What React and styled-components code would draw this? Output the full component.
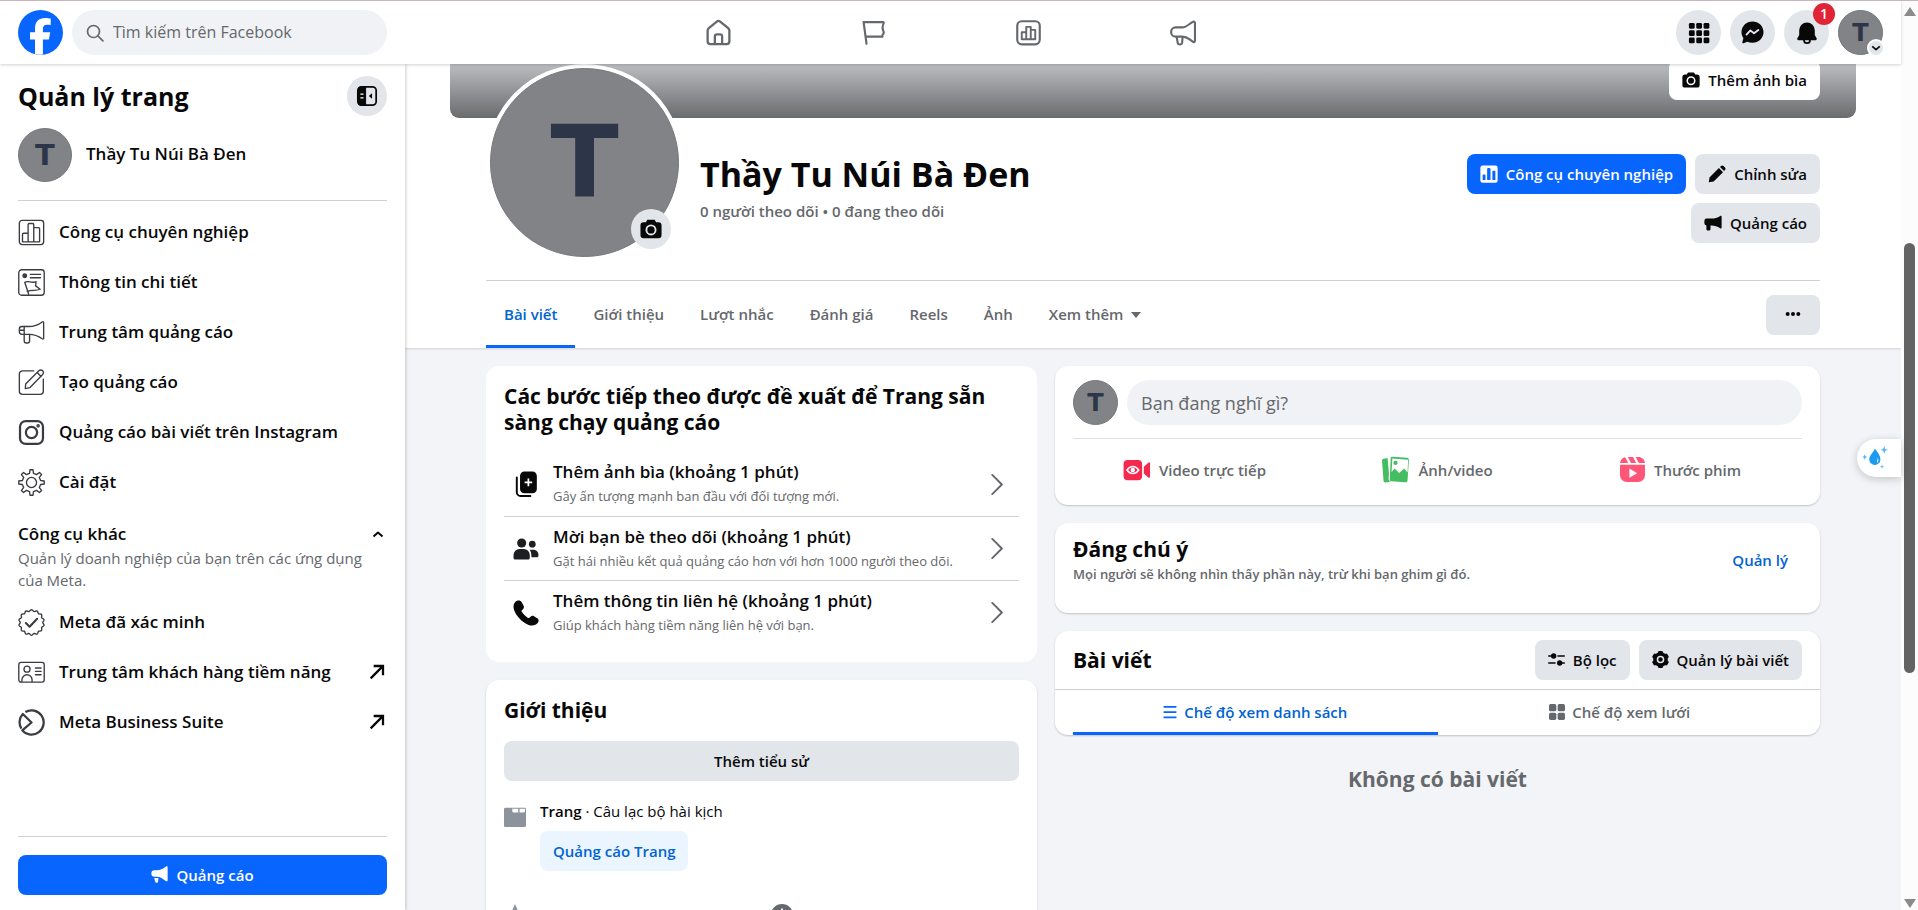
import React from "react";
import styled, { createGlobalStyle, css } from "styled-components";

const menuItems = [
  { icon: "chart", label: "Công cụ chuyên nghiệp" },
  { icon: "details", label: "Thông tin chi tiết" },
  { icon: "megaphone", label: "Trung tâm quảng cáo" },
  { icon: "compose", label: "Tạo quảng cáo" },
  { icon: "instagram", label: "Quảng cáo bài viết trên Instagram" },
  { icon: "gear", label: "Cài đặt" },
];

const otherTools = [
  { icon: "verified", label: "Meta đã xác minh" },
  { icon: "contact", label: "Trung tâm khách hàng tiềm năng", external: true },
  { icon: "suite", label: "Meta Business Suite", external: true },
];

const tabs = ["Bài viết", "Giới thiệu", "Lượt nhắc", "Đánh giá", "Reels", "Ảnh"];

const steps = [
  {
    icon: "addPhoto",
    title: "Thêm ảnh bìa (khoảng 1 phút)",
    text: "Gây ấn tượng mạnh ban đầu với đối tượng mới.",
  },
  {
    icon: "friends",
    title: "Mời bạn bè theo dõi (khoảng 1 phút)",
    text: "Gặt hái nhiều kết quả quảng cáo hơn với hơn 1000 người theo dõi.",
  },
  {
    icon: "phone",
    title: "Thêm thông tin liên hệ (khoảng 1 phút)",
    text: "Giúp khách hàng tiềm năng liên hệ với bạn.",
  },
];

// points of a wavy badge outline around (cx, cy)
const wave = (cx, cy, r, amp, count) => {
  const pts = [];
  for (let i = 0; i <= 120; i++) {
    const a = (i / 120) * Math.PI * 2 - Math.PI / 2;
    const rr = r + amp * Math.cos(a * count + (Math.PI / 2) * count);
    pts.push(`${(cx + rr * Math.cos(a)).toFixed(2)} ${(cy + rr * Math.sin(a)).toFixed(2)}`);
  }
  return `M${pts.join("L")}Z`;
};

// outline of a cog with flat teeth
const cog = (cx, cy, inner, outer, teeth) => {
  const pts = [];
  const step = (Math.PI * 2) / teeth;
  for (let i = 0; i < teeth; i++) {
    const a = i * step - Math.PI / 2;
    [[-0.27, inner], [-0.15, outer], [0.15, outer], [0.27, inner]].forEach(([k, r]) => {
      pts.push(`${(cx + r * Math.cos(a + k * step)).toFixed(2)} ${(cy + r * Math.sin(a + k * step)).toFixed(2)}`);
    });
  }
  return `M${pts.join("L")}Z`;
};

const line = (width) => ({
  fill: "none",
  stroke: "currentColor",
  strokeWidth: width,
  strokeLinecap: "round",
  strokeLinejoin: "round",
});

const drawings = {
  home: (
    <g {...line(1.9)}>
      <path d="M3 10.4c0-.8.4-1.5 1-2L10.6 3a2.2 2.2 0 0 1 2.8 0L20 8.4c.6.5 1 1.2 1 2v8.8a2.4 2.4 0 0 1-2.4 2.4H5.4A2.4 2.4 0 0 1 3 19.2z" />
      <path d="M9 21.4v-6.2c0-1 .7-1.7 1.7-1.7h2.6c1 0 1.7.7 1.7 1.7v6.2" />
    </g>
  ),
  flag: (
    <g {...line(1.9)}>
      <path d="M5.800 22L3.200 2.800h17.200c.6 0 .9.6.6 1.100-1.300 2.600-1.300 4.800 0 7.500.3.700 0 2.300-.8 2.300l-.2 2H5" />
    </g>
  ),
  chartRound: (
    <g {...line(1.9)}>
      <rect x="2" y="2" width="20" height="20.5" rx="4" />
      <path d="M6 18v-6.200h4V18zM10 18V7h4v11zM14 18V9.700h4V18z" strokeWidth="1.7" />
    </g>
  ),
  megaphoneRound: (
    <g {...line(1.9)}>
      <path d="M11 7.500H5a4 4 0 0 0-4 4c0 2.300 1.700 4.200 4 4.200h6c2.400 0 4.500 1 6.500 2.500l2.700 2c1 .7 2 .2 2-1V3.600c0-1.200-1-1.700-2-1l-2.700 1.800C15.500 5.900 13.400 7.500 11 7.500z" />
      <path d="M6 16l.8 5c.3 2.200 3.700 2.200 4 0l.4-5" />
    </g>
  ),
  grid: (
    <g fill="currentColor">
      {[1, 9, 17].map((y) => [1, 9, 17].map((x) => <rect key={`${x}-${y}`} x={x} y={y} width="6.3" height="6.3" rx="1.5" />))}
    </g>
  ),
  messenger: (
    <>
      <path fill="currentColor" d="M12 .5C5.600.5.500 5.400.500 11.600c0 2.400.7 4.500 2 6.300L1.400 22c-.2.900.5 1.500 1.300 1.200l3.900-1.600c1.600.8 3.500 1.200 5.400 1.200 6.400 0 11.500-4.900 11.500-11.200S18.400.5 12 .5z" />
      <path {...line(2)} stroke="#e2e5e9" d="M5.800 14.200l4-4.400 3.800 3 4.500-3.400" />
    </>
  ),
  bell: (
    <path fill="currentColor" d="M12 .5a8.500 8.500 0 0 0-8.500 8.500v5.200l-2 3.600c-.5.9.1 2 1.200 2h5.100a4.200 4.200 0 0 0 8.400 0h5.100c1.100 0 1.700-1.100 1.200-2l-2-3.600V9A8.500 8.500 0 0 0 12 .5zM9.700 19.800h4.600a2.300 2.300 0 0 1-4.600 0z" />
  ),
  panel: (
    <>
      <rect {...line(1.9)} x="2" y="2" width="20" height="20" rx="4" />
      <path fill="currentColor" d="M6 1.500h5v21H6a4 4 0 0 1-4-4v-13a4 4 0 0 1 4-4zM17.500 9v6L14 12z" />
      <path stroke="#fff" strokeWidth="1.5" d="M4.800 10h3.400M4.800 14h3.400" />
    </>
  ),
  chart: (
    <g {...line(1.2)}>
      <rect x="1.2" y="1.2" width="21.6" height="21.6" rx="2.5" />
      <path d="M4 20.300v-6.600c0-.7.4-1 1-1h4v7.600zM9 20.300V5c0-.7.400-1 1-1h3c.7 0 1 .3 1 1v15.300zM14 20.300V7.600h4.200c.7 0 1 .4 1 1v11.700z" />
    </g>
  ),
  details: (
    <g {...line(1.2)}>
      <rect x=".7" y=".7" width="22.6" height="22.6" rx="2.5" />
      <circle cx="6" cy="6" r="1.6" fill="currentColor" />
      <path d="M11 4.800h9M11 7.800h9M9.500 22.500L6 11.800c3.500-2 6.500 1.500 10-.7l-.3 3.900 4 3c-3.500 1.800-8 .2-11.500 2" />
    </g>
  ),
  megaphone: (
    <g {...line(1.2)}>
      <path d="M9.500 6.700H3.500c-1.300 0-2.300.9-2.300 2.200v2.500c0 1.300 1 2.200 2.300 2.200h6c4.700 0 8.500 1.300 12 4 .7.500 1.300.2 1.300-.6V3.300c0-.9-.6-1.200-1.300-.7-3.500 2.700-7.300 4.100-12 4.100z" />
      <path d="M5.500 6.700v12.600c0 1.400.8 2 2 2h.8c1.300 0 2-.6 2-2v-5.700M1.500 10h4" />
    </g>
  ),
  compose: (
    <g {...line(1.2)}>
      <path d="M14 1.700H4A2.800 2.800 0 0 0 1.200 4.500v15.300a2.800 2.800 0 0 0 2.800 2.800h15.700a2.800 2.800 0 0 0 2.800-2.800V9" />
      <path d="M6.500 17.500l.3-4.200L18.500 1.600c1-1 2.500-.9 3.400 0s1 2.300 0 3.300L10.500 16.600zM17 3.200l3.500 3.500" />
    </g>
  ),
  instagram: (
    <g {...line(2)}>
      <rect x="1.8" y="1.8" width="20.4" height="20.4" rx="5" />
      <circle cx="12" cy="12" r="5" />
      <circle cx="17.9" cy="6.1" r=".6" />
    </g>
  ),
  gear: (
    <g {...line(1.2)}>
      <path d={cog(12, 12, 8.3, 11.4, 8)} />
      <circle cx="12" cy="12" r="4.5" />
    </g>
  ),
  verified: (
    <g {...line(1.2)}>
      <path d={wave(12, 12, 10.7, 0.7, 14)} />
      <path d="M7 12.500l3.300 3.200 6.700-7" strokeWidth="1.9" />
    </g>
  ),
  contact: (
    <g {...line(1.2)}>
      <rect x=".7" y="3" width="22.6" height="17.5" rx="2" />
      <circle cx="8" cy="9" r="2.7" />
      <path d="M3.500 20v-1.500a4.500 4.500 0 0 1 9 0V20M15.500 8h5M15.500 11h5M15.500 14h5" />
    </g>
  ),
  suite: (
    <g {...line(2)} strokeLinecap="butt">
      <path d="M6.500 2.700A10.800 10.800 0 1 1 3.800 19L12 12 4.300 4.500A10.800 10.800 0 0 0 3 17.500" />
    </g>
  ),
  arrow: <path {...line(3.4)} strokeLinecap="butt" strokeLinejoin="miter" d="M2.500 21.500L20 4M7 3h14v14" />,
  caretUp: <path {...line(4)} strokeLinecap="butt" d="M3 17l9-8 9 8" />,
  caretDown: <path {...line(4)} strokeLinecap="butt" d="M3 8l9 8 9-8" />,
  ads: (
    <path fill="currentColor" d="M10 6H3.500A3 3 0 0 0 .5 9v3.300a3 3 0 0 0 2.700 3V20c0 1.400 1 2 2 2h1.500c1.200 0 2-.8 2-2v-4.700H10c4 0 8 1.200 11.600 3.600 1 .7 1.900.2 1.900-1V3.500c0-1.200-.9-1.700-1.900-1C18 4.800 14 6 10 6z" />
  ),
  adsWhite: (
    <path fill="currentColor" d="M8 6H5A4.500 4.500 0 0 0 .5 10.500 4.500 4.500 0 0 0 5 15h3c5 0 9 3 12.800 6 1.300.9 2.700.4 2.700-1V2c0-1.500-1.500-2-2.700-1C17 4 13 6 8 6zM4.500 17h6l-.5 5.200c-.3 2-3.500 2-4 0z" />
  ),
  camera: (
    <path fill="currentColor" fillRule="evenodd" d="M8 2h8l1.600 2.500H20A3.500 3.500 0 0 1 23.500 8v10.500A3.500 3.500 0 0 1 20 22H4A3.500 3.500 0 0 1 .5 18.500V8A3.500 3.500 0 0 1 4 4.500h2.400zm4 5a6 6 0 1 0 0 12 6 6 0 0 0 0-12zm0 2a4 4 0 1 1 0 8 4 4 0 0 1 0-8z" />
  ),
  tools: (
    <>
      <rect x=".5" y=".5" width="23" height="23" rx="3" fill="#fff" />
      <path fill="#0866ff" d="M3.500 20v-6.500c0-1.200 3.800-1.200 3.800 0V20zM9.500 20V5c0-1.500 4.500-1.500 4.500 0v15zM16.500 20V8.500c0-1.300 4-1.300 4 0V20z" />
    </>
  ),
  pencil: (
    <path fill="currentColor" d="M1 23l1-6.500L14.500 4l5.500 5.500L7.500 22zM16 2.600l1.300-1.200c1-1 2.500-1 3.500 0l1.800 1.800c1 1 1 2.500 0 3.500L21.400 8z" />
  ),
  dots: (
    <g fill="currentColor">
      <circle cx="4" cy="12" r="3" />
      <circle cx="12" cy="12" r="3" />
      <circle cx="20" cy="12" r="3" />
    </g>
  ),
  addPhoto: (
    <>
      <rect x="6.5" y=".5" width="15.5" height="20" rx="4" fill="currentColor" />
      <path {...line(1.8)} d="M3.500 6v13.500a3.500 3.500 0 0 0 3.500 3.500h9" />
      <path stroke="#fff" strokeWidth="1.6" d="M14.200 7v7M10.700 10.500h7" />
    </>
  ),
  friends: (
    <g fill="#1c1e21">
      <circle cx="8" cy="6.5" r="4.2" />
      <path d="M.5 20v-2.500a5.500 5.500 0 0 1 5.500-5.500h4a5.500 5.500 0 0 1 5.500 5.500V20c0 1-.6 1.700-1.700 1.700H2.200C1.100 21.700.5 21 .5 20z" />
      <circle cx="17.8" cy="7.5" r="3.1" />
      <path d="M15.500 12.600h3.300c2.600 0 4.700 2 4.700 4.600v.8c0 1-.7 1.700-1.700 1.700H17c0-3-.2-5-1.500-7.100z" />
    </g>
  ),
  phone: (
    <path fill="currentColor" d="M3.600.8C5 0 7 .3 7.900 1.800l1.900 3.400c.6 1.200.3 2.400-.6 3.300l-1 1c-.4.400-.4 1 0 1.600a22 22 0 0 0 5.300 5.300c.6.400 1.200.4 1.700 0l1-1c.9-.9 2.100-1 3.200-.4l3 1.800c1.500 1 1.500 3 .5 4.300-2 2.700-5.700 3.200-9 1.700C8 20.200 3 14.700 1 9.200-.2 5.800.600 2.300 3.600.800z" />
  ),
  chevron: <path {...line(2.2)} d="M6 1l11 11L6 23" />,
  folder: (
    <path fill="#8c939d" fillRule="evenodd" d="M0 3.500A1.500 1.500 0 0 1 1.500 2h21A1.500 1.500 0 0 1 24 3.500v18a1.500 1.500 0 0 1-1.500 1.500h-21A1.500 1.500 0 0 1 0 21.500zM9 3v2.500c0 1 .6 1.500 1.500 1.500h5V3zM17 3v4h4.500c1 0 1.500-.5 1.500-1.500V3z" />
  ),
  live: (
    <>
      <path fill="#f3294e" d="M4 3.500h9.500c2 0 3.500 1.300 3.500 3.500v11c0 2.200-1.500 3.500-3.500 3.500H4c-2 0-3.500-1.300-3.500-3.500V7C.5 4.800 2 3.500 4 3.500zM18.500 9.500L22.500 6c.8-.7 1.500-.4 1.500.6v11.800c0 1-.7 1.300-1.500.6l-4-3.500z" />
      <path fill="none" stroke="#fff" strokeWidth="1.3" d="M3.500 12.400c3-4.200 7.500-4.200 10.500 0-3 4.200-7.500 4.200-10.500 0z" />
      <circle cx="8.700" cy="12.400" r="2" fill="#fff" />
    </>
  ),
  photo: (
    <>
      <path fill="#45bd62" d="M1.500 2.500L5 1.800 6.800 23l-4 .5c-.8 0-1.300-.4-1.400-1.200L0 4.200C0 3.200.6 2.600 1.500 2.500z" />
      <path fill="#fff" d="M9.300.6l-2 1.500-1.500 18.500 2 2z" />
      <path fill="#45bd62" fillRule="evenodd" d="M9.300.600l13 1c1 .1 1.700.8 1.600 1.900l-1.200 18.200c-.1 1.100-.9 1.800-2 1.700L8.300 22.500c-1-.1-1.500-.9-1.400-1.900L7.700 2.200C7.800 1.100 8.300.5 9.300.6zM9.200 2.200l-.7 12 2.700-3 4 4 4.500-4 3 3.500.5-11.300z" />
      <circle cx="12" cy="6.200" r="1.900" fill="#45bd62" />
    </>
  ),
  reels: (
    <>
      <path fill="#ff5677" d="M0 7.500h24v10A6.500 6.500 0 0 1 17.500 24h-11A6.500 6.500 0 0 1 0 17.500zM0 5.700C.5 2.300 2.500.5 5 .2l3 5.500zM7.500 0h5l3 5.700h-5zM15 0h2.500C21 0 23.600 2.500 24 5.700h-6z" />
      <path fill="#fff" d="M9 11l7.500 4.500L9 20z" />
    </>
  ),
  filter: (
    <>
      <path {...line(2)} d="M1 7h6M14 7h9M1 17h9M18 17h5" />
      <circle cx="8" cy="7" r="3.8" fill="currentColor" />
      <circle cx="16.5" cy="17" r="3.8" fill="currentColor" />
    </>
  ),
  gearSolid: (
    <>
      <path {...line(3)} fill="currentColor" d={cog(12, 12, 9, 10.8, 6)} />
      <circle cx="12" cy="12" r="4.3" fill="none" stroke="#e2e5e9" strokeWidth="2.2" />
    </>
  ),
  list: <path stroke="#0866ff" strokeWidth="3" d="M1 3h22M1 12h22M1 21h22" />,
  tiles: (
    <g fill="currentColor">
      {[0, 13].map((y) => [0, 13].map((x) => <rect key={`${x}-${y}`} x={x} y={y} width="11" height="11" rx="2.5" />))}
    </g>
  ),
  search: (
    <g {...line(2.3)}>
      <circle cx="10" cy="10" r="8" />
      <path d="M16 16l6.500 6.500" />
    </g>
  ),
  star: <path fill="#8c939d" d="M12 0l3.400 7.800 8.600.8-6.500 5.600 2 8.300L12 18.200 4.500 22.500l2-8.300L0 8.600l8.600-.8z" />,
  info: (
    <>
      <circle cx="12" cy="12" r="12" fill="#65686c" />
      <path stroke="#fff" strokeWidth="2" d="M12 5v3M12 10v8" />
    </>
  ),
  drop: (
    <g fill="#1d9bf0">
      <path d="M12 3.500c3 3.800 5 6.500 5 9.800a5 5 0 0 1-10.300 0C6.700 10 10 7.500 12 3.500z" />
      <path fill="#fff" d="M14.500 12c1 1.700.8 3.500-.5 4.600.2-1.700 0-3 .5-4.600z" />
      <path fill="#4db5f9" d="M20.500 1l.9 2.600 2.600.9-2.600.9-.9 2.600-.9-2.600-2.600-.9 2.600-.9zM2.500 8.500l.7 1.800 1.800.7-1.800.7-.7 1.800-.7-1.800L0 11l1.800-.7zM18.500 18l.5 1.500 1.500.5-1.500.5-.5 1.500-.5-1.500-1.500-.5 1.500-.5z" />
    </g>
  ),
};

const Icon = ({ type, size = 18 }) => (
  <IconSvg viewBox="0 0 24 24" width={size} height={size} aria-hidden="true">
    {drawings[type]}
  </IconSvg>
);

const Avatar = ({ size }) => <AvatarCircle $size={size}>T</AvatarCircle>;

const TopBar = () => (
  <Header>
    <HeaderLeft>
      <LogoLink href="#" aria-label="Facebook">
        <svg viewBox="0 0 45 45" width="45" height="45">
          <circle cx="22.5" cy="22.5" r="22.5" fill="#0866ff" />
          <path fill="#fff" d="M17 44.300V29.500h-5v-7.300h5V19c0-7.500 3.500-11 10.500-11 1.700 0 4 .3 5.200.6v6.300c-.8-.1-2-.1-3-.1-3.600 0-4.800 1.300-4.800 4.700v2.700h7.300l-1.300 7.300h-6v14.900a22.500 22.500 0 0 1-7.900-.1z" />
        </svg>
      </LogoLink>
      <SearchBox>
        <Icon type="search" size={18} />
        <SearchInput type="search" placeholder="Tìm kiếm trên Facebook" aria-label="Tìm kiếm trên Facebook" />
      </SearchBox>
    </HeaderLeft>
    <TopNav>
      <NavLink href="#" aria-label="Trang chủ"><Icon type="home" size={29} /></NavLink>
      <NavLink href="#" aria-label="Trang"><Icon type="flag" size={27} /></NavLink>
      <NavLink href="#" aria-label="Bảng điều khiển"><Icon type="chartRound" size={27} /></NavLink>
      <NavLink href="#" aria-label="Quảng cáo"><Icon type="megaphoneRound" size={27} /></NavLink>
    </TopNav>
    <HeaderRight>
      <RoundButton $size={45} aria-label="Menu"><Icon type="grid" size={22} /></RoundButton>
      <RoundButton $size={45} aria-label="Messenger"><Icon type="messenger" size={23} /></RoundButton>
      <RoundButton $size={45} aria-label="Thông báo">
        <Icon type="bell" size={22} />
        <Badge>1</Badge>
      </RoundButton>
      <RoundButton $size={45} aria-label="Tài khoản">
        <Avatar size={45} />
        <AccountArrow><Icon type="caretDown" size={10} /></AccountArrow>
      </RoundButton>
    </HeaderRight>
  </Header>
);

const MenuItem = ({ icon, label, external }) => (
  <li>
    <MenuLink href="#">
      <MenuIcon><Icon type={icon} size={27} /></MenuIcon>
      <MenuLabel>{label}</MenuLabel>
      {external && <Icon type="arrow" size={16} />}
    </MenuLink>
  </li>
);

const SideBar = () => (
  <Side>
    <SideTop>
      <SideTitle>Quản lý trang</SideTitle>
      <RoundButton $size={40} aria-label="Thu gọn"><Icon type="panel" size={22} /></RoundButton>
    </SideTop>
    <PageLink href="#">
      <Avatar size={54} />
      <PageLinkName>Thầy Tu Núi Bà Đen</PageLinkName>
    </PageLink>
    <Menu>{menuItems.map((item) => <MenuItem key={item.label} {...item} />)}</Menu>
    <OtherHead>
      <span>Công cụ khác</span>
      <Icon type="caretUp" size={12} />
    </OtherHead>
    <OtherText>Quản lý doanh nghiệp của bạn trên các ứng dụng của Meta.</OtherText>
    <OtherMenu>{otherTools.map((item) => <MenuItem key={item.label} {...item} />)}</OtherMenu>
    <SideBottom>
      <Button $primary $full>
        <Icon type="adsWhite" size={17} />
        Quảng cáo
      </Button>
    </SideBottom>
  </Side>
);

const Profile = () => (
  <ProfileHead>
    <Cover>
      <Button $white><Icon type="camera" />Thêm ảnh bìa</Button>
    </Cover>
    <Inner>
      <ProfileRow>
        <ProfilePhoto>
          <Avatar size={189} />
          <PhotoButton $size={40} aria-label="Đổi ảnh đại diện"><Icon type="camera" size={22} /></PhotoButton>
        </ProfilePhoto>
        <ProfileText>
          <ProfileName>Thầy Tu Núi Bà Đen</ProfileName>
          <Follow>0 người theo dõi • 0 đang theo dõi</Follow>
        </ProfileText>
        <ProfileActions>
          <Button $primary><Icon type="tools" />Công cụ chuyên nghiệp</Button>
          <Button><Icon type="pencil" />Chỉnh sửa</Button>
          <Button><Icon type="ads" />Quảng cáo</Button>
        </ProfileActions>
      </ProfileRow>
      <TabBar>
        {tabs.map((tab, i) => (
          <Tab href="#" key={tab} $active={i === 0}>{tab}</Tab>
        ))}
        <Tab href="#">Xem thêm<Triangle /></Tab>
        <MoreButton aria-label="Tùy chọn khác"><Icon type="dots" size={16} /></MoreButton>
      </TabBar>
    </Inner>
  </ProfileHead>
);

const StepsCard = () => (
  <Card $flat>
    <StepsBody>
      <CardTitle>Các bước tiếp theo được đề xuất để Trang sẵn sàng chạy quảng cáo</CardTitle>
      <StepList>
        {steps.map((step) => (
          <Step key={step.title}>
            <Icon type={step.icon} size={26} />
            <StepText>
              <StepTitle>{step.title}</StepTitle>
              <StepNote>{step.text}</StepNote>
            </StepText>
            <StepGo aria-label={step.title}><Icon type="chevron" size={21} /></StepGo>
          </Step>
        ))}
      </StepList>
    </StepsBody>
  </Card>
);

const AboutCard = () => (
  <Card>
    <AboutBody>
      <CardTitle>Giới thiệu</CardTitle>
      <Button $full>Thêm tiểu sử</Button>
      <AboutRow>
        <Icon type="folder" size={22} />
        <div>
          <AboutText><b>Trang</b> · Câu lạc bộ hài kịch</AboutText>
          <Button $soft>Quảng cáo Trang</Button>
        </div>
      </AboutRow>
      <AboutNext>
        <Icon type="star" size={22} />
        <Icon type="info" size={22} />
      </AboutNext>
    </AboutBody>
  </Card>
);

const Composer = () => (
  <Card>
    <ComposerTop>
      <Avatar size={45} />
      <ComposerInput placeholder="Bạn đang nghĩ gì?" aria-label="Bạn đang nghĩ gì?" />
    </ComposerTop>
    <ComposerActions>
      <ComposerAction><Icon type="live" size={27} />Video trực tiếp</ComposerAction>
      <ComposerAction><Icon type="photo" size={27} />Ảnh/video</ComposerAction>
      <ComposerAction><Icon type="reels" size={25} />Thước phim</ComposerAction>
    </ComposerActions>
  </Card>
);

const Featured = () => (
  <Card>
    <FeaturedBody>
      <div>
        <CardTitle>Đáng chú ý</CardTitle>
        <FeaturedNote>Mọi người sẽ không nhìn thấy phần này, trừ khi bạn ghim gì đó.</FeaturedNote>
      </div>
      <TextLink href="#">Quản lý</TextLink>
    </FeaturedBody>
  </Card>
);

const Posts = () => (
  <>
    <Card>
      <PostsTop>
        <CardTitle>Bài viết</CardTitle>
        <Button><Icon type="filter" size={17} />Bộ lọc</Button>
        <Button><Icon type="gearSolid" size={17} />Quản lý bài viết</Button>
      </PostsTop>
      <ViewTabs>
        <ViewTab $active><Icon type="list" size={14} />Chế độ xem danh sách</ViewTab>
        <ViewTab><Icon type="tiles" size={16} />Chế độ xem lưới</ViewTab>
      </ViewTabs>
    </Card>
    <Empty>Không có bài viết</Empty>
  </>
);

const App = () => (
  <Screen>
    <GlobalStyle />
    <Window>
      <TopBar />
      <Body>
        <SideBar />
        <Main>
          <Profile />
          <Content>
            <Column>
              <StepsCard />
              <AboutCard />
            </Column>
            <Column>
              <Composer />
              <Featured />
              <Posts />
            </Column>
          </Content>
        </Main>
      </Body>
      <Floating aria-label="Trợ lý"><Icon type="drop" size={26} /></Floating>
    </Window>
    <ScrollBar>
      <ScrollArrow />
      <ScrollTrack>
        <ScrollThumb />
      </ScrollTrack>
      <ScrollArrow $down />
    </ScrollBar>
  </Screen>
);

export default App;

const GlobalStyle = createGlobalStyle`
  * {
    box-sizing: border-box;
  }
  body {
    margin: 0;
    font-family: "Open Sans", "Noto Sans", sans-serif;
    font-size: 16px;
    color: #080809;
    background: #f2f4f7;
  }
  h1, h2, p, ul {
    margin: 0;
    padding: 0;
  }
  ul {
    list-style: none;
  }
  a {
    color: inherit;
    text-decoration: none;
  }
  button, input {
    font-family: inherit;
    color: inherit;
    border: none;
    outline: none;
  }
  button {
    cursor: pointer;
  }
`;

const Screen = styled.div`
  display: flex;
  height: 100vh;
  overflow: hidden;
  border-top: 1px solid #cbb3bb;
`;

const Window = styled.div`
  position: relative;
  flex: 1;
  min-width: 0;
  display: flex;
  flex-direction: column;
`;

const IconSvg = styled.svg`
  display: block;
  flex-shrink: 0;
`;

const AvatarCircle = styled.span`
  width: ${(props) => props.$size}px;
  height: ${(props) => props.$size}px;
  flex-shrink: 0;
  display: flex;
  align-items: center;
  justify-content: center;
  border-radius: 50%;
  border: 1px solid #77787b;
  background: #828386;
  color: #2c3648;
  font-family: "DejaVu Sans", sans-serif;
  font-weight: 700;
  font-size: ${(props) => Math.round(props.$size * 0.53)}px;
  line-height: 1;
`;

const Header = styled.header`
  position: relative;
  z-index: 2;
  height: 63px;
  flex-shrink: 0;
  display: grid;
  grid-template-columns: 1fr auto 1fr;
  align-items: center;
  padding: 0 18px;
  background: #fff;
  box-shadow: 0 1px 3px rgba(0, 0, 0, 0.18);
`;

const HeaderLeft = styled.div`
  display: flex;
  align-items: center;
  gap: 9px;
`;

const LogoLink = styled.a`
  display: block;
  height: 45px;
`;

const SearchBox = styled.label`
  width: 315px;
  height: 45px;
  display: flex;
  align-items: center;
  gap: 9px;
  padding: 0 14px;
  border-radius: 23px;
  background: #f0f2f5;
  color: #65686c;
`;

const SearchInput = styled.input`
  flex: 1;
  min-width: 0;
  padding: 0 0 2px;
  background: transparent;
  font-size: 16px;
  &::placeholder {
    color: #65686c;
  }
`;

const TopNav = styled.nav`
  display: flex;
`;

const NavLink = styled.a`
  width: 155px;
  height: 60px;
  display: flex;
  align-items: center;
  justify-content: center;
  color: #65686c;
`;

const HeaderRight = styled.div`
  display: flex;
  justify-content: flex-end;
  gap: 9px;
`;

const RoundButton = styled.button`
  position: relative;
  width: ${(props) => props.$size}px;
  height: ${(props) => props.$size}px;
  flex-shrink: 0;
  display: flex;
  align-items: center;
  justify-content: center;
  padding: 0;
  border-radius: 50%;
  background: #e2e5e9;
`;

const Badge = styled.span`
  position: absolute;
  top: -7px;
  right: -6px;
  width: 22px;
  height: 22px;
  border-radius: 50%;
  background: #e02436;
  color: #fff;
  font-size: 14px;
  font-weight: 600;
  line-height: 22px;
  text-align: center;
`;

const AccountArrow = styled.span`
  position: absolute;
  right: -2px;
  bottom: -2px;
  width: 18px;
  height: 18px;
  display: flex;
  align-items: center;
  justify-content: center;
  border: 2px solid #fff;
  border-radius: 50%;
  background: #e2e5e9;
`;

const Body = styled.div`
  flex: 1;
  min-height: 0;
  display: flex;
`;

const Side = styled.aside`
  position: relative;
  z-index: 1;
  width: 405px;
  flex-shrink: 0;
  display: flex;
  flex-direction: column;
  padding: 12px 18px 15px;
  background: #fff;
  box-shadow: 1px 0 3px rgba(0, 0, 0, 0.2);
`;

const SideTop = styled.div`
  display: flex;
  align-items: center;
  justify-content: space-between;
`;

const SideTitle = styled.h1`
  font-size: 25px;
  font-weight: 700;
  line-height: 32px;
`;

const PageLink = styled.a`
  display: flex;
  align-items: center;
  gap: 14px;
  padding: 12px 0 18px;
  border-bottom: 1px solid #ced0d4;
`;

const PageLinkName = styled.span`
  padding-bottom: 3px;
  font-size: 17px;
  font-weight: 600;
`;

const Menu = styled.ul`
  padding-top: 6px;
`;

const OtherMenu = styled(Menu)`
  flex: 1;
`;

const MenuLink = styled.a`
  height: 50px;
  display: flex;
  align-items: center;
  gap: 14px;
  padding-right: 2px;
`;

const MenuIcon = styled.span`
  color: #3a3c40;
`;

const MenuLabel = styled.span`
  flex: 1;
  padding-bottom: 2px;
  font-size: 17px;
  font-weight: 600;
  white-space: nowrap;
`;

const OtherHead = styled.div`
  display: flex;
  align-items: center;
  justify-content: space-between;
  padding: 16px 3px 2px 0;
  font-size: 17px;
  font-weight: 600;
  line-height: 22px;
`;

const OtherText = styled.p`
  font-size: 15px;
  line-height: 22px;
  color: #65686c;
`;

const SideBottom = styled.div`
  padding-top: 18px;
  border-top: 1px solid #ced0d4;
`;

const Button = styled.button`
  height: 40px;
  display: inline-flex;
  align-items: center;
  justify-content: center;
  gap: 8px;
  width: ${(props) => (props.$full ? "100%" : "auto")};
  padding: 0 13px 1px;
  border-radius: 8px;
  background: #e2e5e9;
  font-size: 15px;
  font-weight: 600;
  white-space: nowrap;
  ${(props) =>
    props.$primary &&
    css`
      background: #0866ff;
      color: #fff;
    `}
  ${(props) =>
    props.$white &&
    css`
      background: #fff;
    `}
  ${(props) =>
    props.$soft &&
    css`
      background: #ebf5ff;
      color: #0064d1;
    `}
`;

const Main = styled.main`
  flex: 1;
  min-width: 0;
  overflow: hidden;
`;

const ProfileHead = styled.section`
  padding: 0 45px;
  background: #fff;
  box-shadow: 0 1px 2px rgba(0, 0, 0, 0.15);
`;

const Cover = styled.div`
  height: 54px;
  display: flex;
  align-items: flex-end;
  justify-content: flex-end;
  padding: 0 36px 18px;
  border-radius: 0 0 9px 9px;
  background: linear-gradient(#bcbdc1, #6a6b6d);
`;

const Inner = styled.div`
  padding: 0 36px;
`;

const ProfileRow = styled.div`
  height: 163px;
  display: flex;
  align-items: flex-start;
  border-bottom: 1px solid #ced0d4;
`;

const ProfilePhoto = styled.div`
  position: relative;
  margin-top: -54px;
  padding: 4px;
  border-radius: 50%;
  background: #fff;
`;

const PhotoButton = styled(RoundButton)`
  position: absolute;
  right: 12px;
  bottom: 12px;
`;

const ProfileText = styled.div`
  flex: 1;
  padding: 35px 0 0 17px;
`;

const ProfileName = styled.h1`
  font-size: 34px;
  font-weight: 700;
  line-height: 42px;
  white-space: nowrap;
`;

const Follow = styled.p`
  padding-top: 6px;
  font-size: 15px;
  font-weight: 600;
  line-height: 20px;
  color: #65686c;
`;

const ProfileActions = styled.div`
  width: 360px;
  display: flex;
  flex-wrap: wrap;
  justify-content: flex-end;
  gap: 9px;
  padding-top: 36px;
`;

const TabBar = styled.nav`
  height: 67px;
  display: flex;
  align-items: center;
`;

const Tab = styled.a`
  height: 67px;
  display: flex;
  align-items: center;
  gap: 8px;
  padding: 1px 18px 0;
  border-bottom: 3px solid ${(props) => (props.$active ? "#0866ff" : "transparent")};
  color: ${(props) => (props.$active ? "#0064d1" : "#65686c")};
  font-size: 15px;
  font-weight: 600;
  white-space: nowrap;
`;

const Triangle = styled.i`
  margin-top: 2px;
  border: 5px solid transparent;
  border-top: 6px solid #65686c;
  border-bottom: none;
`;

const MoreButton = styled(Button)`
  width: 54px;
  margin-left: auto;
`;

const Content = styled.div`
  display: grid;
  grid-template-columns: 551fr 765fr;
  gap: 18px;
  align-items: start;
  padding: 18px 81px 0;
`;

const Column = styled.div`
  min-width: 0;
  display: flex;
  flex-direction: column;
  gap: 18px;
`;

const Card = styled.section`
  border-radius: 13px;
  background: #fff;
  box-shadow: ${(props) => (props.$flat ? "none" : "0 1px 2px rgba(0, 0, 0, 0.2)")};
`;

const CardTitle = styled.h2`
  font-size: 21px;
  font-weight: 700;
  line-height: 26px;
`;

const StepsBody = styled.div`
  padding: 17px 18px 18px;
`;

const StepList = styled.ul`
  padding-top: 17px;
`;

const Step = styled.li`
  height: 64px;
  display: flex;
  align-items: center;
  gap: 14px;
  padding: 0 11px 0 9px;
  & + & {
    border-top: 1px solid #ced0d4;
  }
`;

const StepText = styled.div`
  flex: 1;
`;

const StepTitle = styled.p`
  font-size: 17px;
  font-weight: 600;
  line-height: 24px;
`;

const StepNote = styled.p`
  font-size: 13px;
  line-height: 24px;
  color: #65686c;
`;

const StepGo = styled.button`
  padding: 0;
  background: transparent;
  color: #65686c;
`;

const AboutBody = styled.div`
  display: flex;
  flex-direction: column;
  gap: 18px;
  padding: 17px 18px 18px;
`;

const AboutRow = styled.div`
  display: flex;
  gap: 14px;
  padding-top: 1px;
  > svg {
    margin-top: 6px;
  }
`;

const AboutText = styled.p`
  padding-bottom: 9px;
  font-size: 15px;
  line-height: 22px;
  b {
    font-weight: 600;
  }
`;

const AboutNext = styled.div`
  display: grid;
  grid-template-columns: 1fr 1fr;
  gap: 18px;
  padding-top: 15px;
`;

const ComposerTop = styled.div`
  display: flex;
  gap: 9px;
  margin: 0 18px;
  padding: 14px 0 13px;
  border-bottom: 1px solid #dfe1e5;
`;

const ComposerInput = styled.input`
  flex: 1;
  min-width: 0;
  height: 45px;
  padding: 0 14px;
  border-radius: 23px;
  background: #f0f2f5;
  font-size: 18px;
  &::placeholder {
    color: #65686c;
  }
`;

const ComposerActions = styled.div`
  display: grid;
  grid-template-columns: 1fr 1fr 1fr;
  padding: 9px 18px 12px;
`;

const ComposerAction = styled.button`
  height: 45px;
  display: flex;
  align-items: center;
  justify-content: center;
  gap: 9px;
  padding: 0 6px 2px;
  background: transparent;
  color: #65686c;
  font-size: 15px;
  font-weight: 600;
`;

const FeaturedBody = styled.div`
  display: flex;
  justify-content: space-between;
  padding: 13px 32px 27px 18px;
`;

const FeaturedNote = styled.p`
  font-size: 13px;
  font-weight: 600;
  line-height: 24px;
  color: #65686c;
`;

const TextLink = styled.a`
  padding-top: 12px;
  font-size: 15px;
  font-weight: 600;
  line-height: 24px;
  color: #0064d1;
`;

const PostsTop = styled.div`
  display: flex;
  align-items: center;
  gap: 9px;
  padding: 9px 18px;
  border-bottom: 1px solid #ced0d4;
  h2 {
    flex: 1;
  }
`;

const ViewTabs = styled.div`
  display: grid;
  grid-template-columns: 1fr 1fr;
  padding: 0 18px;
`;

const ViewTab = styled.button`
  height: 45px;
  display: flex;
  align-items: center;
  justify-content: center;
  gap: 7px;
  padding: 2px 0 0;
  background: transparent;
  border-bottom: 3px solid ${(props) => (props.$active ? "#0866ff" : "transparent")};
  color: ${(props) => (props.$active ? "#0064d1" : "#65686c")};
  font-size: 15px;
  font-weight: 600;
`;

const Empty = styled.p`
  padding-top: 12px;
  color: #65686c;
  font-size: 21px;
  font-weight: 700;
  line-height: 28px;
  text-align: center;
`;

const Floating = styled.button`
  position: absolute;
  z-index: 3;
  top: 438px;
  right: 0;
  width: 44px;
  height: 38px;
  display: flex;
  align-items: center;
  padding: 0 5px;
  border-radius: 19px 0 0 19px;
  background: #fff;
  box-shadow: 0 2px 8px rgba(0, 0, 0, 0.2);
`;

const ScrollBar = styled.div`
  width: 17px;
  flex-shrink: 0;
  display: flex;
  flex-direction: column;
  align-items: center;
  padding: 6px 0 2px;
  background: #fcfcfc;
`;

const ScrollArrow = styled.i`
  border: 6px solid transparent;
  ${(props) => (props.$down ? "border-top: 9px solid #8b8b8b; border-bottom: none;" : "border-bottom: 9px solid #8b8b8b; border-top: none;")}
`;

const ScrollTrack = styled.div`
  flex: 1;
  display: grid;
  grid-template-rows: 227fr 429fr 226fr;
`;

const ScrollThumb = styled.div`
  grid-row: 2;
  width: 11px;
  border-radius: 6px;
  background: #636363;
`;
